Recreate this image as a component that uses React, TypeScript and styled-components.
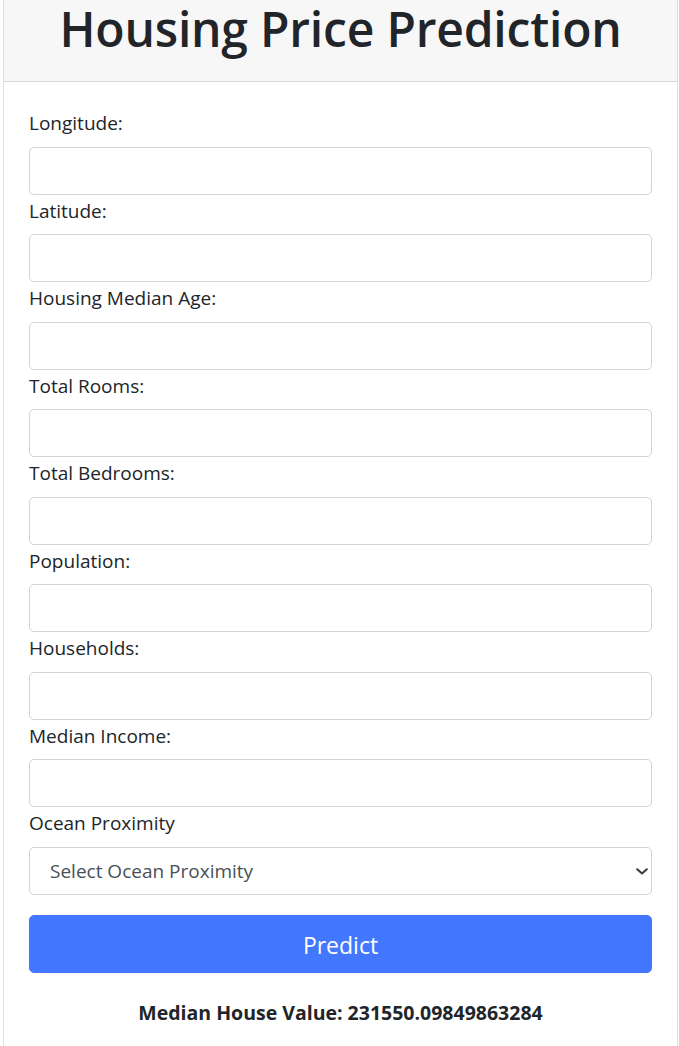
import React from "react";
import styled, { createGlobalStyle } from "styled-components";

const GlobalStyle = createGlobalStyle`
  html, body {
    margin: 0;
    padding: 0;
    background: #ffffff;
  }
  body {
    font-family: "Open Sans", "Noto Sans", sans-serif;
    color: #212529;
  }
  *, *::before, *::after { box-sizing: border-box; }
`;

const Card = styled.div`
  margin: 0 1px 0 3px;
  border: 1px solid rgba(0, 0, 0, 0.125);
  border-top: none;
  border-radius: 0 0 4px 4px;
  background: #fff;
  overflow: hidden;
`;

const CardHeader = styled.div`
  background: #f7f7f7;
  border-bottom: 1px solid rgba(0, 0, 0, 0.125);
  padding: 2px 10px 25px;
`;

const Title = styled.h1`
  margin: 0;
  text-align: center;
  font-family: "Open Sans", sans-serif;
  font-size: 48px;
  font-weight: 600;
  line-height: 54px;
  letter-spacing: -0.2px;
  color: #212529;
  white-space: nowrap;
`;

const CardBody = styled.form`
  padding: 25px 25px 40px;
  display: flex;
  flex-direction: column;
`;

const Label = styled.label`
  display: block;
  margin: 4px 0 11.5px;
  font-size: 19px;
  line-height: 24px;
  color: #212529;
`;

const Input = styled.input`
  display: block;
  width: 100%;
  height: 48px;
  padding: 0 16px;
  font-family: inherit;
  font-size: 19px;
  color: #495057;
  background: #fff;
  border: 1px solid #ced4da;
  border-radius: 5px;
  outline: none;
`;

const SelectWrap = styled.div`
  position: relative;
`;

const Select = styled.select`
  display: block;
  width: 100%;
  height: 48px;
  padding: 0 40px 0 20px;
  font-family: inherit;
  font-size: 19px;
  line-height: 46px;
  color: #495057;
  background: #fff;
  border: 1px solid #ced4da;
  border-radius: 5px;
  appearance: none;
  -webkit-appearance: none;
  outline: none;
`;

const Chevron = styled.svg`
  position: absolute;
  right: 4px;
  top: 21px;
  width: 12px;
  height: 7px;
  pointer-events: none;
`;

const Button = styled.button`
  display: block;
  width: 100%;
  height: 58px;
  margin-top: 20.5px;
  padding: 3px 0 0;
  font-family: inherit;
  font-size: 23px;
  line-height: 53px;
  color: #fff;
  background: #4377ff;
  border: 1px solid #4377ff;
  border-radius: 5px;
  cursor: pointer;
`;

const Result = styled.p`
  margin: 26px 0 0;
  text-align: center;
  font-size: 19.5px;
  font-weight: 700;
  line-height: 28.5px;
  color: #212529;
`;

const fields = [
  "Longitude:",
  "Latitude:",
  "Housing Median Age:",
  "Total Rooms:",
  "Total Bedrooms:",
  "Population:",
  "Households:",
  "Median Income:",
];

export default function App() {
  return (
    <>
      <GlobalStyle />
      <Card>
        <CardHeader>
          <Title>Housing Price Prediction</Title>
        </CardHeader>
        <CardBody onSubmit={(e) => e.preventDefault()}>
          {fields.map((f) => (
            <React.Fragment key={f}>
              <Label>{f}</Label>
              <Input type="text" />
            </React.Fragment>
          ))}
          <Label>Ocean Proximity</Label>
          <SelectWrap>
            <Select defaultValue="">
              <option value="">Select Ocean Proximity</option>
              <option value="<1H OCEAN">&lt;1H OCEAN</option>
              <option value="INLAND">INLAND</option>
              <option value="ISLAND">ISLAND</option>
              <option value="NEAR BAY">NEAR BAY</option>
              <option value="NEAR OCEAN">NEAR OCEAN</option>
            </Select>
            <Chevron viewBox="0 0 12 7">
              <polyline
                points="1.2,1.2 6,5.6 10.8,1.2"
                fill="none"
                stroke="#343a40"
                strokeWidth="2"
                strokeLinecap="round"
                strokeLinejoin="round"
              />
            </Chevron>
          </SelectWrap>
          <Button type="submit">Predict</Button>
          <Result>Median House Value: 231550.09849863284</Result>
        </CardBody>
      </Card>
    </>
  );
}
